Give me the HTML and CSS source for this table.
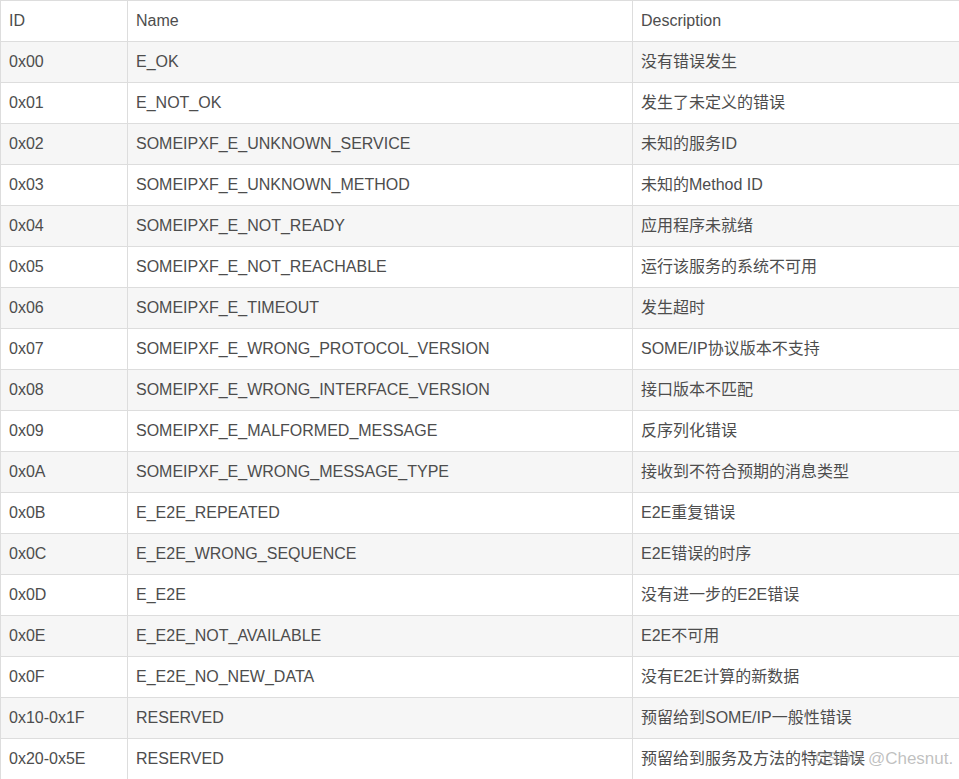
FILE: index.html
```html
<!DOCTYPE html>
<html>
<head>
<meta charset="utf-8">
<link rel="stylesheet" href="styles.css">
</head>
<body>
<div class="wrap">
<table class="tbl">
<colgroup><col class="c1"><col class="c2"><col class="c3"></colgroup>
<thead>
<tr><th>ID</th><th>Name</th><th>Description</th></tr>
</thead>
<tbody>
<tr><td>0x00</td><td>E_OK</td><td>没有错误发生</td></tr>
<tr><td>0x01</td><td>E_NOT_OK</td><td>发生了未定义的错误</td></tr>
<tr><td>0x02</td><td>SOMEIPXF_E_UNKNOWN_SERVICE</td><td>未知的服务ID</td></tr>
<tr><td>0x03</td><td>SOMEIPXF_E_UNKNOWN_METHOD</td><td>未知的Method ID</td></tr>
<tr><td>0x04</td><td>SOMEIPXF_E_NOT_READY</td><td>应用程序未就绪</td></tr>
<tr><td>0x05</td><td>SOMEIPXF_E_NOT_REACHABLE</td><td>运行该服务的系统不可用</td></tr>
<tr><td>0x06</td><td>SOMEIPXF_E_TIMEOUT</td><td>发生超时</td></tr>
<tr><td>0x07</td><td>SOMEIPXF_E_WRONG_PROTOCOL_VERSION</td><td>SOME/IP协议版本不支持</td></tr>
<tr><td>0x08</td><td>SOMEIPXF_E_WRONG_INTERFACE_VERSION</td><td>接口版本不匹配</td></tr>
<tr><td>0x09</td><td>SOMEIPXF_E_MALFORMED_MESSAGE</td><td>反序列化错误</td></tr>
<tr><td>0x0A</td><td>SOMEIPXF_E_WRONG_MESSAGE_TYPE</td><td>接收到不符合预期的消息类型</td></tr>
<tr><td>0x0B</td><td>E_E2E_REPEATED</td><td>E2E重复错误</td></tr>
<tr><td>0x0C</td><td>E_E2E_WRONG_SEQUENCE</td><td>E2E错误的时序</td></tr>
<tr><td>0x0D</td><td>E_E2E</td><td>没有进一步的E2E错误</td></tr>
<tr><td>0x0E</td><td>E_E2E_NOT_AVAILABLE</td><td>E2E不可用</td></tr>
<tr><td>0x0F</td><td>E_E2E_NO_NEW_DATA</td><td>没有E2E计算的新数据</td></tr>
<tr><td>0x10-0x1F</td><td>RESERVED</td><td>预留给到SOME/IP一般性错误</td></tr>
<tr><td>0x20-0x5E</td><td>RESERVED</td><td>预留给到服务及方法的特定错误</td></tr>
</tbody>
</table>
<div class="watermark">CSDN @Chesnut.</div>
</div>
</body>
</html>
```
FILE: styles.css
```css
html, body {
  margin: 0;
  padding: 0;
  background: #fff;
  overflow: hidden;
}
.wrap {
  position: relative;
  width: 959px;
  height: 779px;
  overflow: hidden;
}
.tbl {
  border-collapse: collapse;
  table-layout: fixed;
  width: 980px;
  font-family: "Liberation Sans", Arial, "Noto Sans CJK SC", sans-serif;
  font-size: 16px;
  color: #4d4d4d;
}
.c1 { width: 127px; }
.c2 { width: 505px; }
.c3 { width: 348px; }
.tbl th, .tbl td {
  border: 1px solid #dddddd;
  padding: 8px 8px;
  line-height: 24px;
  height: 24px;
  text-align: left;
  font-weight: normal;
  white-space: nowrap;
  vertical-align: middle;
}
.tbl tbody tr:nth-child(odd) td {
  background: #f6f6f6;
}
.watermark {
  position: absolute;
  left: 815px;
  top: 747px;
  font-family: "Liberation Sans", Arial, "Noto Sans CJK SC", sans-serif;
  font-size: 17px;
  line-height: 24px;
  color: rgba(150, 150, 150, 0.6);
  white-space: nowrap;
}
```
